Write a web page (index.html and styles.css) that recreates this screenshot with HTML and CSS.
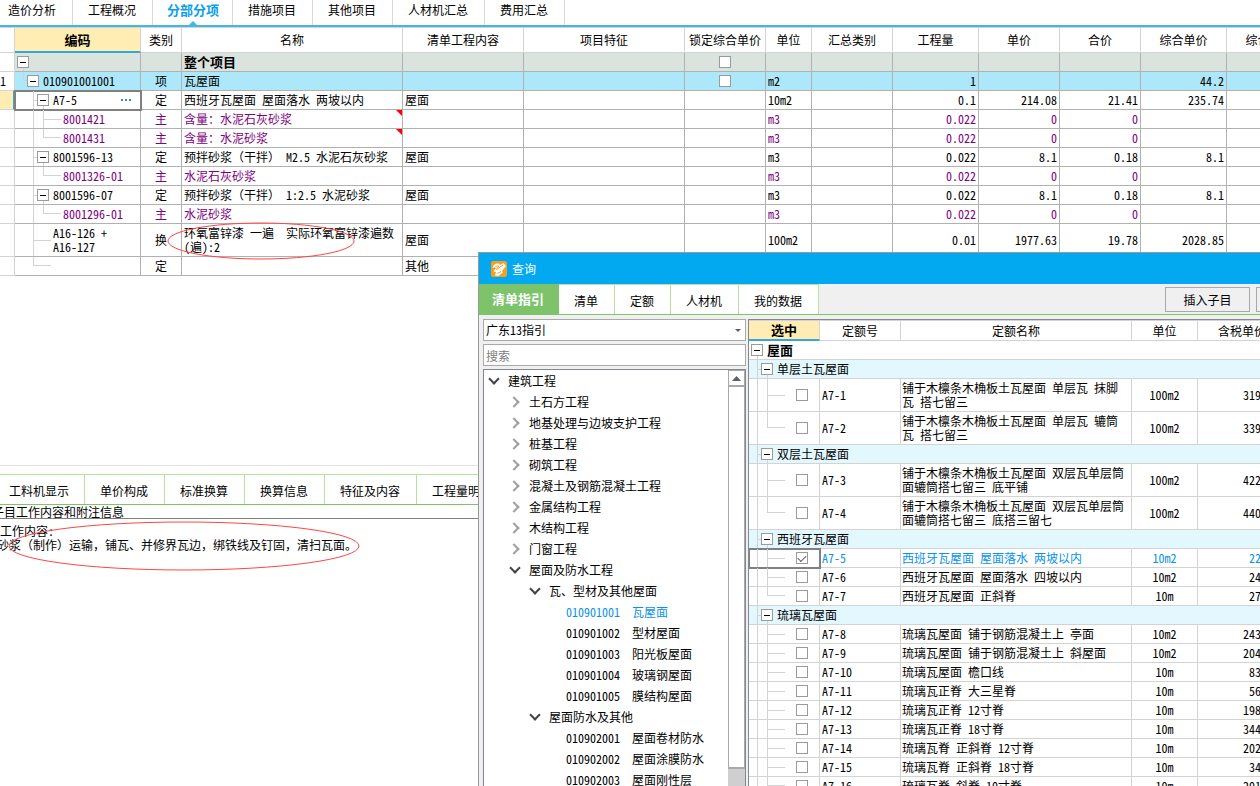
FILE: index.html
```html
<!DOCTYPE html>
<html lang="zh-CN">
<head>
<meta charset="utf-8">
<title>分部分项</title>
<link rel="stylesheet" href="styles.css">
</head>
<body>
<main class="workspace">
  <nav class="tabs top-tabs">
    <button class="tab">造价分析</button>
    <button class="tab">工程概况</button>
    <button class="tab active">分部分项</button>
    <button class="tab">措施项目</button>
    <button class="tab">其他项目</button>
    <button class="tab">人材机汇总</button>
    <button class="tab">费用汇总</button>
  </nav>

  <section class="sheet">
    <table class="grid bill">
      <colgroup>
        <col class="w-row"><col class="w-code"><col class="w-kind"><col class="w-name"><col class="w-content"><col class="w-feature"><col class="w-num"><col class="w-unit"><col class="w-num"><col class="w-wide"><col class="w-num"><col class="w-num"><col class="w-wide"><col class="w-wide">
      </colgroup>
      <thead>
        <tr><th></th><th class="current">编码</th><th>类别</th><th>名称</th><th>清单工程内容</th><th>项目特征</th><th>锁定综合单价</th><th>单位</th><th>汇总类别</th><th>工程量</th><th>单价</th><th>合价</th><th>综合单价</th><th>综合合价</th></tr>
      </thead>
      <tbody>
        <tr class="root"><td></td><td><div class="node"><button class="toggle at-root" aria-label="折叠"></button></div></td><td></td><td>整个项目</td><td></td><td></td><td><input type="checkbox" aria-label="锁定整个项目"></td><td></td><td></td><td></td><td></td><td></td><td></td><td></td></tr>
        <tr class="item"><td>1</td><td><div class="node"><i class="guide end stub"></i><button class="toggle" aria-label="折叠"></button><span class="label">010901001001</span></div></td><td>项</td><td>瓦屋面</td><td></td><td></td><td><input type="checkbox" aria-label="锁定瓦屋面"></td><td>m2</td><td></td><td>1</td><td></td><td></td><td>44.2</td><td></td></tr>
        <tr class="picked"><td></td><td class="cursor"><div class="node"><i class="space"></i><i class="guide tee stub"></i><button class="toggle" aria-label="折叠"></button><span class="label">A7-5</span><button class="more" aria-label="更多"><svg viewBox="0 0 12 4"><path d="M1 1h2v2H1zM5 1h2v2H5zM9 1h2v2H9z" fill="#3585d0"/></svg></button></div></td><td>定</td><td>西班牙瓦屋面 屋面落水 两坡以内</td><td>屋面</td><td></td><td></td><td>10m2</td><td></td><td>0.1</td><td>214.08</td><td>21.41</td><td>235.74</td><td></td></tr>
        <tr class="material"><td></td><td><div class="node"><i class="space"></i><i class="guide"></i><i class="guide tee arm"></i><span>8001421</span></div></td><td>主</td><td class="noted">含量：水泥石灰砂浆</td><td></td><td></td><td></td><td>m3</td><td></td><td>0.022</td><td>0</td><td>0</td><td></td><td></td></tr>
        <tr class="material"><td></td><td><div class="node"><i class="space"></i><i class="guide"></i><i class="guide end arm"></i><span>8001431</span></div></td><td>主</td><td class="noted">含量：水泥砂浆</td><td></td><td></td><td></td><td>m3</td><td></td><td>0.022</td><td>0</td><td>0</td><td></td><td></td></tr>
        <tr><td></td><td><div class="node"><i class="space"></i><i class="guide tee stub"></i><button class="toggle" aria-label="折叠"></button><span class="label">8001596-13</span></div></td><td>定</td><td>预拌砂浆（干拌） M2.5 水泥石灰砂浆</td><td>屋面</td><td></td><td></td><td>m3</td><td></td><td>0.022</td><td>8.1</td><td>0.18</td><td>8.1</td><td></td></tr>
        <tr class="material"><td></td><td><div class="node"><i class="space"></i><i class="guide"></i><i class="guide end arm"></i><span>8001326-01</span></div></td><td>主</td><td>水泥石灰砂浆</td><td></td><td></td><td></td><td>m3</td><td></td><td>0.022</td><td>0</td><td>0</td><td></td><td></td></tr>
        <tr><td></td><td><div class="node"><i class="space"></i><i class="guide tee stub"></i><button class="toggle" aria-label="折叠"></button><span class="label">8001596-07</span></div></td><td>定</td><td>预拌砂浆（干拌） 1:2.5 水泥砂浆</td><td>屋面</td><td></td><td></td><td>m3</td><td></td><td>0.022</td><td>8.1</td><td>0.18</td><td>8.1</td><td></td></tr>
        <tr class="material"><td></td><td><div class="node"><i class="space"></i><i class="guide"></i><i class="guide end arm"></i><span>8001296-01</span></div></td><td>主</td><td>水泥砂浆</td><td></td><td></td><td></td><td>m3</td><td></td><td>0.022</td><td>0</td><td>0</td><td></td><td></td></tr>
        <tr class="tall"><td></td><td><div class="node"><i class="space"></i><i class="guide tee arm"></i><span>A16-126 +<br>A16-127</span></div></td><td>换</td><td>环氧富锌漆 一遍&nbsp; 实际环氧富锌漆遍数<br>(遍):2</td><td>屋面</td><td></td><td></td><td>100m2</td><td></td><td>0.01</td><td>1977.63</td><td>19.78</td><td>2028.85</td><td></td></tr>
        <tr><td></td><td><div class="node"><i class="space"></i><i class="guide end arm"></i></div></td><td>定</td><td></td><td>其他</td><td></td><td></td><td></td><td></td><td></td><td></td><td></td><td></td><td></td></tr>
      </tbody>
    </table>
  </section>

  <section class="detail">
    <nav class="tabs detail-tabs">
      <button class="tab">工料机显示</button>
      <button class="tab">单价构成</button>
      <button class="tab">标准换算</button>
      <button class="tab">换算信息</button>
      <button class="tab">特征及内容</button>
      <button class="tab">工程量明细</button>
    </nav>
    <h2 class="note-title">子目工作内容和附注信息</h2>
    <div class="note">
      <p>工作内容:</p>
      <p class="note-body">砂浆（制作）运输，铺瓦、并修界瓦边，绑铁线及钉固，清扫瓦面。</p>
    </div>
  </section>
</main>

<svg class="mark mark-name" viewBox="0 0 188 40"><ellipse cx="93" cy="20" rx="93" ry="18"/></svg>
<svg class="mark mark-note" viewBox="0 0 352 50"><ellipse cx="176" cy="25" rx="175" ry="24"/></svg>

<section class="dialog" role="dialog" aria-label="查询">
  <header class="title">
    <svg class="logo" viewBox="0 0 16 16"><rect width="16" height="16" rx="2" fill="#f6a01d"/><path d="M1.500 6.500C2.500 3.500 5 2 7.500 2.500L9 4l3.500-2L15 5l-4 5 1 1.500L7.500 15 4 14.500 5 11 2.500 10.500 5 7z" fill="#fff"/><path d="M3.500 6.500C5 5 6.500 4.500 7.500 5L5.500 8.500 12 4M6.500 12.500l3.500-2" fill="none" stroke="#f6a01d"/></svg>
    <span>查询</span>
  </header>
  <div class="toolbar">
    <nav class="tabs dialog-tabs">
      <button class="tab active">清单指引</button>
      <button class="tab">清单</button>
      <button class="tab">定额</button>
      <button class="tab">人材机</button>
      <button class="tab">我的数据</button>
    </nav>
    <div class="actions">
      <button class="action">插入子目</button>
      <button class="action" aria-label="更多操作"></button>
    </div>
  </div>
  <div class="panes">
    <aside class="guide-pane">
      <div class="combo">
        <select aria-label="指引"><option>广东13指引</option></select>
        <svg viewBox="0 0 6 3"><path d="M0 0h6L3 3z" fill="#5c5f66"/></svg>
      </div>
      <input class="search" type="text" placeholder="搜索" aria-label="搜索">
      <div class="tree-box">
        <ul class="tree">
          <li class="open">建筑工程</li>
          <li class="shut d1">土石方工程</li>
          <li class="shut d1">地基处理与边坡支护工程</li>
          <li class="shut d1">桩基工程</li>
          <li class="shut d1">砌筑工程</li>
          <li class="shut d1">混凝土及钢筋混凝土工程</li>
          <li class="shut d1">金属结构工程</li>
          <li class="shut d1">木结构工程</li>
          <li class="shut d1">门窗工程</li>
          <li class="open d1">屋面及防水工程</li>
          <li class="open d2">瓦、型材及其他屋面</li>
          <li class="leaf chosen"><span>010901001</span>瓦屋面</li>
          <li class="leaf"><span>010901002</span>型材屋面</li>
          <li class="leaf"><span>010901003</span>阳光板屋面</li>
          <li class="leaf"><span>010901004</span>玻璃钢屋面</li>
          <li class="leaf"><span>010901005</span>膜结构屋面</li>
          <li class="open d2">屋面防水及其他</li>
          <li class="leaf"><span>010902001</span>屋面卷材防水</li>
          <li class="leaf"><span>010902002</span>屋面涂膜防水</li>
          <li class="leaf"><span>010902003</span>屋面刚性层</li>
        </ul>
        <div class="scroll">
          <button class="scroll-up" aria-label="向上滚动"><svg viewBox="0 0 9 5"><path d="M0 5 4.500 0 9 5z" fill="#5c5f66"/></svg></button>
          <div class="thumb"></div>
        </div>
      </div>
    </aside>
    <div class="quota-pane">
      <table class="grid quota">
        <colgroup><col class="q-pick"><col class="q-code"><col class="q-name"><col class="q-unit"><col class="q-price"></colgroup>
        <thead><tr><th class="current">选中</th><th>定额号</th><th>定额名称</th><th>单位</th><th>含税单价</th></tr></thead>
        <tbody>
          <tr class="chapter"><td colspan="5"><div class="node"><button class="toggle at-root" aria-label="折叠"></button><span class="label">屋面</span></div></td></tr>
          <tr class="group"><td colspan="5"><div class="node"><i class="guide tee stub"></i><button class="toggle" aria-label="折叠"></button><span class="label">单层土瓦屋面</span></div></td></tr>
          <tr class="tall"><td><div class="node"><i class="guide"></i><i class="guide tee arm"></i><input type="checkbox" aria-label="A7-1"></div></td><td>A7-1</td><td>铺于木檩条木桷板土瓦屋面 单层瓦 抹脚<br>瓦 搭七留三</td><td>100m2</td><td>319</td></tr>
          <tr class="tall"><td><div class="node"><i class="guide"></i><i class="guide end arm"></i><input type="checkbox" aria-label="A7-2"></div></td><td>A7-2</td><td>铺于木檩条木桷板土瓦屋面 单层瓦 辘筒<br>瓦 搭七留三</td><td>100m2</td><td>339</td></tr>
          <tr class="group"><td colspan="5"><div class="node"><i class="guide tee stub"></i><button class="toggle" aria-label="折叠"></button><span class="label">双层土瓦屋面</span></div></td></tr>
          <tr class="tall"><td><div class="node"><i class="guide"></i><i class="guide tee arm"></i><input type="checkbox" aria-label="A7-3"></div></td><td>A7-3</td><td>铺于木檩条木桷板土瓦屋面 双层瓦单层筒<br>面辘筒搭七留三 底平铺</td><td>100m2</td><td>422</td></tr>
          <tr class="tall"><td><div class="node"><i class="guide"></i><i class="guide end arm"></i><input type="checkbox" aria-label="A7-4"></div></td><td>A7-4</td><td>铺于木檩条木桷板土瓦屋面 双层瓦单层筒<br>面辘筒搭七留三 底搭三留七</td><td>100m2</td><td>440</td></tr>
          <tr class="group"><td colspan="5"><div class="node"><i class="guide tee stub"></i><button class="toggle" aria-label="折叠"></button><span class="label">西班牙瓦屋面</span></div></td></tr>
          <tr class="chosen"><td class="cursor"><div class="node"><i class="guide"></i><i class="guide tee arm"></i><input type="checkbox" aria-label="A7-5" checked></div></td><td>A7-5</td><td>西班牙瓦屋面 屋面落水 两坡以内</td><td>10m2</td><td>22</td></tr>
          <tr><td><div class="node"><i class="guide"></i><i class="guide tee arm"></i><input type="checkbox" aria-label="A7-6"></div></td><td>A7-6</td><td>西班牙瓦屋面 屋面落水 四坡以内</td><td>10m2</td><td>24</td></tr>
          <tr><td><div class="node"><i class="guide"></i><i class="guide end arm"></i><input type="checkbox" aria-label="A7-7"></div></td><td>A7-7</td><td>西班牙瓦屋面 正斜脊</td><td>10m</td><td>27</td></tr>
          <tr class="group"><td colspan="5"><div class="node"><i class="guide tee stub"></i><button class="toggle" aria-label="折叠"></button><span class="label">琉璃瓦屋面</span></div></td></tr>
          <tr><td><div class="node"><i class="guide"></i><i class="guide tee arm"></i><input type="checkbox" aria-label="A7-8"></div></td><td>A7-8</td><td>琉璃瓦屋面 铺于钢筋混凝土上 亭面</td><td>10m2</td><td>243</td></tr>
          <tr><td><div class="node"><i class="guide"></i><i class="guide tee arm"></i><input type="checkbox" aria-label="A7-9"></div></td><td>A7-9</td><td>琉璃瓦屋面 铺于钢筋混凝土上 斜屋面</td><td>10m2</td><td>204</td></tr>
          <tr><td><div class="node"><i class="guide"></i><i class="guide tee arm"></i><input type="checkbox" aria-label="A7-10"></div></td><td>A7-10</td><td>琉璃瓦屋面 檐口线</td><td>10m</td><td>83</td></tr>
          <tr><td><div class="node"><i class="guide"></i><i class="guide tee arm"></i><input type="checkbox" aria-label="A7-11"></div></td><td>A7-11</td><td>琉璃瓦正脊 大三星脊</td><td>10m</td><td>56</td></tr>
          <tr><td><div class="node"><i class="guide"></i><i class="guide tee arm"></i><input type="checkbox" aria-label="A7-12"></div></td><td>A7-12</td><td>琉璃瓦正脊 12寸脊</td><td>10m</td><td>198</td></tr>
          <tr><td><div class="node"><i class="guide"></i><i class="guide tee arm"></i><input type="checkbox" aria-label="A7-13"></div></td><td>A7-13</td><td>琉璃瓦正脊 18寸脊</td><td>10m</td><td>344</td></tr>
          <tr><td><div class="node"><i class="guide"></i><i class="guide tee arm"></i><input type="checkbox" aria-label="A7-14"></div></td><td>A7-14</td><td>琉璃瓦脊 正斜脊 12寸脊</td><td>10m</td><td>202</td></tr>
          <tr><td><div class="node"><i class="guide"></i><i class="guide tee arm"></i><input type="checkbox" aria-label="A7-15"></div></td><td>A7-15</td><td>琉璃瓦脊 正斜脊 18寸脊</td><td>10m</td><td>34</td></tr>
          <tr><td><div class="node"><i class="guide"></i><i class="guide end arm"></i><input type="checkbox" aria-label="A7-16"></div></td><td>A7-16</td><td>琉璃瓦脊 斜脊 10寸脊</td><td>10m</td><td>201</td></tr>
        </tbody>
      </table>
    </div>
  </div>
</section>
</body>
</html>
```
FILE: styles.css
```css
* { box-sizing: border-box; }

body {
  margin: 0;
  height: 100vh;
  overflow: hidden;
  position: relative;
  background: #fff;
  color: #000;
  font: 12px/14px "Noto Sans Mono CJK SC", "Noto Sans CJK SC", sans-serif;
}

button, input, select { font: inherit; color: inherit; margin: 0; }
button { padding: 0; border: 0; background: none; }
svg { display: block; }
p, h2, ul { margin: 0; padding: 0; }

/* ---- workspace ---- */
.workspace { height: 100%; display: flex; flex-direction: column; }
.tabs { display: flex; flex: none; white-space: nowrap; }
.tab { flex: none; padding: 0 16px 0 15px; border-right: 1px solid #d9d9d9; }

.top-tabs { height: 27px; border-bottom: 2px solid #41b7e3; }
.top-tabs .tab { padding-bottom: 5px; }
.top-tabs .tab:first-child { padding-left: 8px; }
.top-tabs .active { position: relative; padding: 0 13px 6px 14px; color: #0a9fe6; font-size: 13px; font-weight: bold; }
.top-tabs .active::after {
  content: "";
  position: absolute;
  left: 50%;
  bottom: 0;
  margin-left: -4px;
  border: 4px solid transparent;
  border-top: 0;
  border-bottom-color: #41b7e3;
}

.sheet { flex: 1; min-height: 0; overflow: hidden; border-bottom: 1px solid #e4e4e4; }

/* ---- shared grid ---- */
.grid { table-layout: fixed; border-collapse: separate; border-spacing: 0; width: 100%; }
.grid th { padding: 0; font-weight: normal; border: solid #d3d3d3; border-width: 0 1px 1px 0; white-space: nowrap; }
.grid td { height: 19px; padding: 0 2px; border: solid #b1b1b1; border-width: 0 1px 1px 0; white-space: nowrap; }
.grid .tall td { height: 33px; }
.grid th.current { background: #ffedb3; border-bottom: 2px solid #38a6d9; font-size: 13px; font-weight: bold; }
.grid td.cursor { outline: 2px solid #808080; outline-offset: -1px; }

.node { display: flex; align-items: center; height: 18px; }
.tall .node { height: 32px; }
.toggle { position: relative; flex: none; width: 12px; height: 12px; border: 1px solid #9b9b9b; background: #fff; }
.toggle::before { content: ""; position: absolute; left: 2px; right: 2px; top: 5px; height: 1px; background: #000; }
.toggle::after { content: ""; position: absolute; left: 5px; top: 11px; height: 3px; border-left: 1px solid #d3d3d3; }
.at-root { margin-left: -6px; }
.label { margin-left: 4px; }
.space { flex: none; width: 10px; }
.guide { position: relative; flex: none; align-self: stretch; width: 10px; border-left: 1px solid #d3d3d3; }
.guide.end { height: 50%; align-self: flex-start; border-bottom: 1px solid #d3d3d3; }
.guide.tee::after { content: ""; position: absolute; left: 0; right: 0; top: 50%; border-top: 1px solid #d3d3d3; }
.guide.stub { width: 4px; }
.guide.arm { width: 18px; margin-right: 2px; }

input[type="checkbox"] { appearance: none; display: block; flex: none; width: 12px; height: 12px; border: 1px solid #9b9b9b; background: #fff; }
input[type="checkbox"]:checked::after {
  content: "";
  display: block;
  width: 7px;
  height: 4px;
  margin: 2px 0 0 1px;
  border: solid #5a5a6a;
  border-width: 0 0 1px 1px;
  transform: rotate(-45deg);
}

/* ---- bill table ---- */
.bill { min-width: 1313px; }
.bill th { height: 26px; border-top: 1px solid #d3d3d3; }
.w-row { width: 15px; }
.w-code { width: 126px; }
.w-kind { width: 41px; }
.w-name { width: 221px; }
.w-content { width: 121px; }
.w-feature { width: 161px; }
.w-unit { width: 46px; }
.w-num { width: 81px; }
.w-wide { width: 86px; }
.bill td:first-child { padding: 0; border-color: #d3d3d3; }
.bill td:nth-child(2) { padding: 0 0 0 8px; }
.bill td:nth-child(3) { text-align: center; }
.bill td:nth-child(n+10) { text-align: right; }
.bill td input { margin: 0 auto; }
.root td:not(:first-child) { background: #dae3de; }
.root td:nth-child(4) { font-size: 13px; font-weight: bold; }
.item td:not(:first-child) { background: #ade8fa; }
.picked td:first-child { background: #ffedb3; border-right: 2px solid #38a6d9; }
.material { color: #800080; }
.noted { position: relative; }
.noted::after {
  content: "";
  position: absolute;
  top: 0;
  right: 0;
  border-left: 6px solid transparent;
  border-top: 6px solid #f00;
}
.more { width: 12px; margin: 0 8px 0 auto; }

/* ---- detail panel ---- */
.detail { flex: none; height: 320px; padding-top: 8px; overflow: hidden; }
.detail-tabs { height: 31px; border-top: 1px solid #b5e2a0; border-bottom: 1px solid #7cc36a; }
.detail-tabs .tab { border-color: #b5e2a0; padding-top: 3px; }
.detail-tabs .tab:first-child { padding-left: 9px; padding-right: 15px; }
.note-title { height: 14px; margin-left: -8px; border-bottom: 1px solid #808080; font-size: 12px; font-weight: normal; }
.note { padding-top: 5px; white-space: nowrap; }
.note-body { text-indent: -3px; }

/* ---- review marks ---- */
.mark { position: absolute; fill: none; stroke: #f44; overflow: visible; }
.mark-name { left: 168px; top: 221px; width: 188px; }
.mark-note { left: 8px; top: 521px; width: 352px; }

/* ---- query dialog ---- */
.dialog {
  position: absolute;
  left: 478px;
  top: 252px;
  right: -90px;
  bottom: 0;
  display: flex;
  flex-direction: column;
  overflow: hidden;
  border: solid #999;
  border-width: 1px 0 0 1px;
  background: #f0f0f0;
}
.title { flex: none; display: flex; align-items: center; gap: 5px; height: 31px; padding-left: 12px; background: #02a9f1; color: #fff; }
.logo { width: 16px; height: 16px; }
.toolbar { flex: none; display: flex; justify-content: space-between; height: 31px; border-bottom: 1px solid #7cc36a; }
.dialog-tabs .tab { background: #fff; border-color: #b5e2a0; border-top: 1px solid #b5e2a0; padding-top: 3px; }
.dialog-tabs .active { padding: 0 15px 0 13px; background: #7dc36a; border: 0; color: #fff; font-size: 13px; font-weight: bold; }
.actions { display: flex; gap: 6px; padding: 3px 9px 2px 0; }
.action { width: 85px; border: 1px solid #a9a9a9; background: #f0f0f0; }

.panes { flex: 1; min-height: 0; display: flex; gap: 2px; padding: 4px 0 0 4px; }
.guide-pane { flex: none; width: 263px; display: flex; flex-direction: column; gap: 3px; }
.combo { position: relative; flex: none; height: 22px; }
.combo select { appearance: none; width: 100%; height: 100%; padding: 0 2px; border: 1px solid #a9a9a9; border-radius: 0; background: #fff; }
.combo svg { position: absolute; right: 5px; top: 10px; width: 6px; }
.search { flex: none; height: 22px; padding: 0 2px; border: 1px solid #a9a9a9; background: #fff; }
.search::placeholder { color: #808080; opacity: 1; }

.tree-box { flex: 1; min-height: 0; display: flex; overflow: hidden; border: 1px solid #828790; border-bottom: 0; background: #fff; }
.tree { flex: 1; list-style: none; white-space: nowrap; }
.tree li { display: flex; align-items: center; height: 21px; padding-left: 6px; }
.tree .open::before, .tree .shut::before { content: ""; flex: none; width: 6px; height: 6px; margin-right: 10px; }
.tree .open::before { border: solid #444; border-width: 0 2px 2px 0; transform: translateY(-2px) rotate(45deg); }
.tree .shut::before { border: solid #a0a0a0; border-width: 2px 2px 0 0; transform: translateX(-1px) rotate(45deg); }
.tree .d1 { padding-left: 27px; }
.tree .d2 { padding-left: 47px; }
.tree .leaf { padding-left: 82px; }
.tree .leaf span { margin-right: 12px; }
.chosen { color: #0a93e6; }

.scroll { flex: none; display: flex; flex-direction: column; width: 17px; padding-bottom: 17px; background: #cfcfcf; }
.scroll-up { display: grid; place-items: center; flex: none; height: 17px; border: 1px solid #a9a9a9; border-bottom-width: 2px; background: #fff; }
.scroll-up svg { width: 9px; }
.thumb { flex: 1; border: 1px solid #a9a9a9; border-width: 0 1px 2px; background: #fff; }

.quota-pane { flex: 1; min-width: 0; overflow: hidden; border: solid #828790; border-width: 1px 0 0 1px; background: #fff; }
.quota th { height: 21px; border-top: 1px solid #d3d3d3; }
.quota td { border-color: #d3d3d3; }
.q-pick { width: 71px; }
.q-code { width: 81px; }
.q-name { width: 231px; }
.q-unit { width: 66px; }
.quota th:last-child { text-align: left; padding-left: 20px; }
.quota td:first-child { padding: 0 0 0 8px; }
.quota td:nth-child(2) { padding: 0 2px; }
.quota td:nth-child(3) { padding: 0 1px; }
.quota td:nth-child(4) { text-align: center; }
.quota td:nth-child(5) { text-align: right; padding-right: 88px; }
.quota input { margin-left: 9px; }
.group td { background: #e3f7ff; }
.chapter .label { font-size: 13px; font-weight: bold; }
```
